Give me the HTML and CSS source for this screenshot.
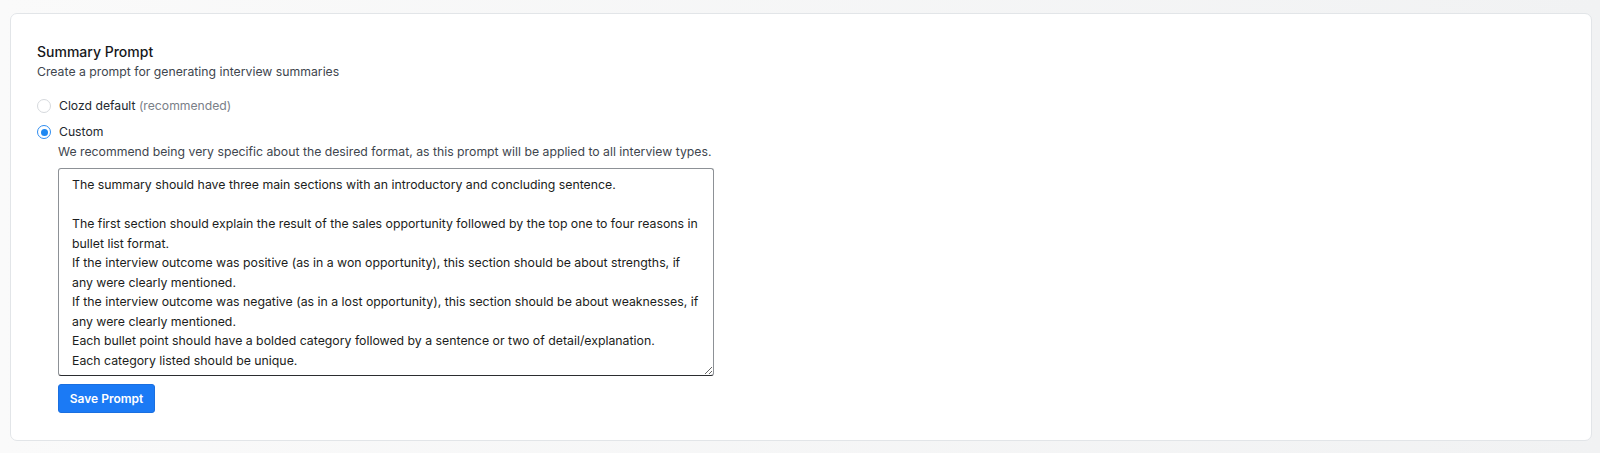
FILE: index.html
```html
<!DOCTYPE html>
<html lang="en">
<head>
<meta charset="utf-8">
<title>Summary Prompt</title>
<link rel="stylesheet" href="styles.css">
</head>
<body>
<div class="page">
  <section class="card">
    <h2 class="title">Summary Prompt</h2>
    <p class="subtitle">Create a prompt for generating interview summaries</p>
    <div class="options">
      <label class="option">
        <span class="radio"></span>
        <span class="label">Clozd default <span class="muted">(recommended)</span></span>
      </label>
      <label class="option">
        <span class="radio checked"></span>
        <span class="label">Custom</span>
      </label>
    </div>
    <div class="custom">
      <p class="hint">We recommend being very specific about the desired format, as this prompt will be applied to all interview types.</p>
      <textarea class="prompt" rows="10">The summary should have three main sections with an introductory and concluding sentence.

The first section should explain the result of the sales opportunity followed by the top one to four reasons in bullet list format.
If the interview outcome was positive (as in a won opportunity), this section should be about strengths, if any were clearly mentioned.
If the interview outcome was negative (as in a lost opportunity), this section should be about weaknesses, if any were clearly mentioned.
Each bullet point should have a bolded category followed by a sentence or two of detail/explanation.
Each category listed should be unique.</textarea>
      <button class="save">Save Prompt</button>
    </div>
  </section>
</div>
</body>
</html>
```

FILE: styles.css
```css
* { box-sizing: border-box; }
html, body {
  margin: 0;
  padding: 0;
}
body {
  width: 1600px;
  height: 453px;
  overflow: hidden;
  background: linear-gradient(to right, #fafafa, #f1f2f3);
  font-family: Inter, "Noto Sans", "Liberation Sans", sans-serif;
  color: #1f2328;
}
.page {
  padding: 13px 8px 12px 10px;
}
.card {
  height: 428px;
  background: #fff;
  border: 1px solid #e2e5e8;
  border-radius: 7px;
  padding: 28px 26px 0 26px;
}
.title {
  margin: 0;
  font-size: 14px;
  font-weight: 500;
  line-height: 20px;
  color: #16181b;
}
.subtitle {
  margin: 1px 0 0;
  font-size: 12.25px;
  line-height: 18px;
  color: #40464e;
}
.options {
  margin-top: 16px;
  display: flex;
  flex-direction: column;
  gap: 8px;
}
.option {
  display: flex;
  align-items: center;
  gap: 8px;
  font-size: 12.2px;
  line-height: 18px;
  color: #24292f;
}
.radio {
  width: 14px;
  height: 14px;
  border-radius: 50%;
  border: 1px solid #d6d9dd;
  background: #fff;
  flex: none;
  position: relative;
}
.radio.checked {
  border-color: #2f8df0;
}
.radio.checked::after {
  content: "";
  position: absolute;
  left: 2.5px;
  top: 2.5px;
  width: 7px;
  height: 7px;
  border-radius: 50%;
  background: #1e88f2;
}
.muted { color: #7a8088; }
.custom {
  padding-left: 21px;
}
.hint {
  margin: 2px 0 0;
  font-size: 12.25px;
  line-height: 18px;
  color: #40464e;
}
.prompt {
  display: block;
  margin-top: 7px;
  width: 656px;
  height: 208px;
  padding: 6px 12px 6px 13px;
  border: 1px solid #8d9196;
  border-bottom-color: #2b2d30;
  border-radius: 3px;
  font-family: Inter, "Noto Sans", "Liberation Sans", sans-serif;
  font-size: 12.3px;
  line-height: 19.5px;
  color: #1b1d20;
  resize: vertical;
  overflow: hidden;
}
.save {
  margin-top: 8px;
  width: 97px;
  height: 29px;
  border: 1px solid #1a6fe0;
  border-radius: 3px;
  background: #1b7af5;
  color: #fff;
  font-family: Inter, "Noto Sans", "Liberation Sans", sans-serif;
  font-size: 12px;
  font-weight: 600;
  padding: 0;
}
```
